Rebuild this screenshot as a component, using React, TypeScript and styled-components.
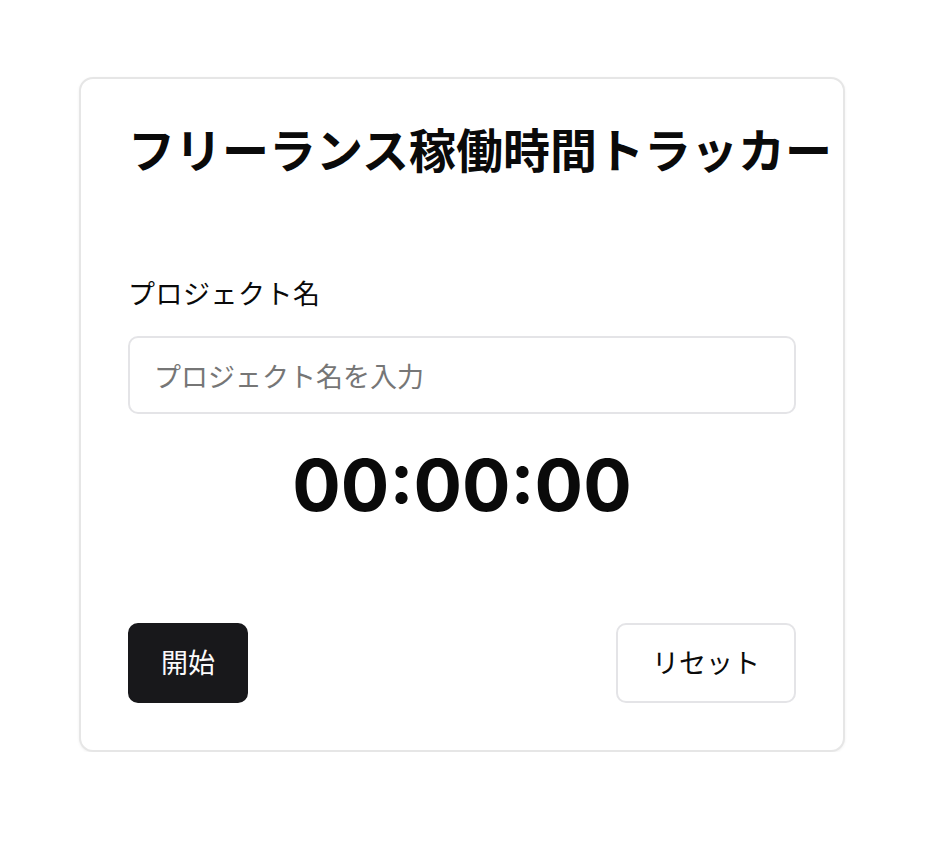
import styled, { createGlobalStyle } from 'styled-components';

const GlobalStyle = createGlobalStyle`
  html, body {
    margin: 0;
    padding: 0;
    background: #ffffff;
    font-family: Inter, "Noto Sans CJK JP", sans-serif;
    color: #0a0a0a;
  }
`;

const Page = styled.div`
  padding: 77px 0 0 79px;
`;

const Card = styled.div`
  box-sizing: border-box;
  width: 766px;
  padding: 47px;
  background: #ffffff;
  border: 2px solid #e6e6e6;
  border-radius: 14px;
  box-shadow: 0 1px 3px rgba(0, 0, 0, 0.06);
`;

const Title = styled.h1`
  margin: 0;
  font-family: "Noto Sans CJK JP", sans-serif;
  font-size: 47px;
  font-weight: 700;
  line-height: 44px;
  white-space: nowrap;
  color: #0a0a0a;
`;

const Label = styled.label`
  display: block;
  margin-top: 103px;
  font-family: "Noto Sans CJK JP", sans-serif;
  font-size: 27px;
  line-height: 40px;
  letter-spacing: 0.5px;
  color: #0a0a0a;
`;

const Input = styled.input`
  box-sizing: border-box;
  display: block;
  width: 100%;
  height: 78px;
  margin-top: 23px;
  padding: 0 24px;
  border: 2px solid #e4e4e7;
  border-radius: 10px;
  background: #ffffff;
  font-family: "Noto Sans CJK JP", sans-serif;
  font-size: 27px;
  color: #0a0a0a;
  outline: none;

  &::placeholder {
    color: #767676;
  }
`;

const Timer = styled.div`
  margin-top: 25px;
  font-family: Inter, sans-serif;
  font-size: 72px;
  font-weight: 700;
  line-height: 91px;
  text-align: center;
  color: #0a0a0a;
`;

const Actions = styled.div`
  display: flex;
  justify-content: space-between;
  align-items: center;
  margin-top: 93px;
`;

const Button = styled.button<{ $primary?: boolean }>`
  box-sizing: border-box;
  height: 80px;
  padding: 0 ${(p) => (p.$primary ? 31 : 34)}px 4px;
  border-radius: 10px;
  border: 2px solid ${(p) => (p.$primary ? '#18181b' : '#e4e4e7')};
  background: ${(p) => (p.$primary ? '#18181b' : '#ffffff')};
  color: ${(p) => (p.$primary ? '#fafafa' : '#0a0a0a')};
  font-family: "Noto Sans CJK JP", sans-serif;
  font-size: 27px;
  cursor: pointer;
`;

export default function App() {
  return (
    <>
      <GlobalStyle />
      <Page>
        <Card>
          <Title>フリーランス稼働時間トラッカー</Title>
          <Label htmlFor="project">プロジェクト名</Label>
          <Input id="project" placeholder="プロジェクト名を入力" />
          <Timer>00:00:00</Timer>
          <Actions>
            <Button $primary>開始</Button>
            <Button>リセット</Button>
          </Actions>
        </Card>
      </Page>
    </>
  );
}
